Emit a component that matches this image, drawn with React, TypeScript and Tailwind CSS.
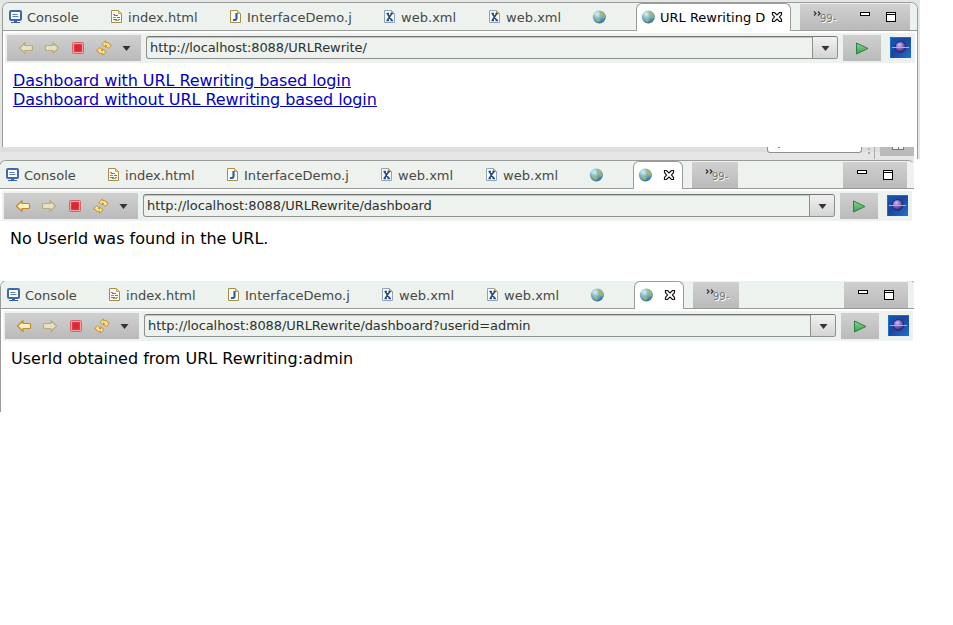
import React from "react";

function ConsoleIcon() {
  return (
    <svg width="16" height="16" viewBox="0 0 16 16" className="shrink-0">
      <rect x="2" y="2" width="11" height="9" rx="1" fill="#fff" stroke="#3f6aa8" strokeWidth="2" />
      <path d="M4.5 5.5h5M4.5 7.5h6" stroke="#5b7fae" />
      <path d="M6 12h3v1H6z" fill="#3465a4" />
      <path d="M3 13.5h9" stroke="#3465a4" />
    </svg>
  );
}

function FileIcon({ kind }: { kind: "html" | "J" | "X" }) {
  const stroke = kind === "X" ? "#8fa3c0" : "#a88d48";
  return (
    <svg width="16" height="16" viewBox="0 0 16 16" className="shrink-0">
      <path d="M2.5 1.5h7l3 3v9h-10z" fill="#fbfcf8" stroke={stroke} />
      <path d="M9.5 1.5v3h3z" fill="#f2d48a" stroke="#c9a55a" />
      {kind === "html" && (
        <>
          <path d="M4 5.5h2M4 8.5h3M9 10.5h2" stroke="#cf6a80" />
          <path d="M5 6.5h4M8 8.5h3M4 10.5h4" stroke="#5776ad" />
          <path d="M6 11.5h4" stroke="#89a874" />
        </>
      )}
      {kind === "J" && <path d="M8.500 4v5.200c0 1.600-1 2-3.500 1.800" fill="none" stroke="#24609c" strokeWidth="2.100" />}
      {kind === "X" && (
        <path d="M5.200 4.500l4.600 7M9.800 4.500l-4.600 7M4.500 4.500H7M8.500 4.500H11M4.500 11.500H7M8.500 11.500H11" stroke="#234a84" strokeWidth="1.500" />
      )}
    </svg>
  );
}

function GlobeIcon() {
  return (
    <svg width="16" height="16" viewBox="0 0 16 16" className="shrink-0">
      <defs>
        <radialGradient id="sea" cx="35%" cy="28%" r="75%">
          <stop offset="0" stopColor="#dcf2f9" />
          <stop offset="0.5" stopColor="#6fb2d2" />
          <stop offset="1" stopColor="#34708f" />
        </radialGradient>
      </defs>
      <circle cx="8.3" cy="8" r="6.5" fill="url(#sea)" />
      <path d="M9 3l2.500-.5 2.500 3 .2 3-2 1.500-1-2.500-2.500-1zM4 8.500l2.500 0 2.500 1.800 0 1.500-2 1.500-2.500-2.500z" fill="#b3b765" opacity=".75" />
      <path d="M3 5l3-2 1 2-2 2z" fill="#c5e4cc" opacity=".7" />
    </svg>
  );
}

function CloseIcon() {
  return (
    <svg width="12" height="12" viewBox="0 0 12 12" className="shrink-0">
      <path
        d="M1.5 1.5h2L6 4l2.500-2.500h2v2L8.500 6l2 2.500v2h-2L6 8l-2.500 2.500h-2v-2L3.500 6l-2-2.500z"
        fill="#fff"
        stroke="#111"
        strokeWidth="1.2"
      />
    </svg>
  );
}

function Overflow() {
  return (
    <div className="flex h-[26px] items-start">
      <svg width="8" height="6" viewBox="0 0 8 6" className="mt-[7px] shrink-0">
        <path d="M1 .5L3 2.500 1 4.500M5 .5L7 2.500 5 4.500" fill="none" stroke="#333" strokeWidth="1.200" />
      </svg>
      <span className="-ml-px mt-[9px] text-[10px] leading-[12px] text-[#777] [text-shadow:1px_1px_0_#fff]">99-</span>
    </div>
  );
}

function WindowControls() {
  return (
    <svg width="37" height="13" viewBox="0 0 37 13" className="mt-[7px] shrink-0">
      <rect x="0.500" y="1.500" width="9" height="3" fill="#fff" stroke="#000" />
      <rect x="26.500" y="1.500" width="9" height="9" fill="#fff" stroke="#000" />
      <path d="M26 3.500h10" stroke="#000" />
    </svg>
  );
}

function Arrow({ active, flip }: { active: boolean; flip?: boolean }) {
  return (
    <svg width="16" height="14" viewBox="0 0 16 14" className={flip ? "shrink-0 -scale-x-100" : "shrink-0"}>
      <path
        d="M1.500 7L7 1.700V4.500h6.500q1 0 1 1v3q0 1-1 1H7v2.800z"
        fill={active ? "#fff3bd" : "#e6e1c4"}
        stroke={active ? "#c08c28" : "#b8ab7c"}
        strokeWidth="1.200"
        strokeLinejoin="round"
      />
    </svg>
  );
}

function StopIcon() {
  return (
    <svg width="12" height="12" viewBox="0 0 12 12" className="shrink-0">
      <rect x=".5" y=".5" width="11" height="11" rx="1" fill="#f0a3a6" stroke="#d5646a" />
      <rect x="2.500" y="2.500" width="7" height="7" fill="#e22530" stroke="#dd3d47" />
    </svg>
  );
}

function RefreshIcon() {
  return (
    <svg width="16" height="16" viewBox="0 0 16 16" className="shrink-0">
      <g fill="#fbe396" stroke="#c6922f" strokeLinejoin="round">
        <path d="M6 4.500L9.500 .8V2.500h1.500q2.500 0 3 2.500h1.300L12.500 8.500 9 5.500h1.500q-.3-.8-1-.7v2.200z" />
        <path d="M10 11.500L6.500 15.200V13.500H5Q2.500 13.500 2 11H.7L3.500 7.500 7 10.500H5.500q.3.800 1 .7V9z" />
      </g>
    </svg>
  );
}

function Caret() {
  return (
    <svg width="9" height="6" viewBox="0 0 9 6" className="shrink-0">
      <path d="M.5 0h8L4.500 5z" fill="#333" />
    </svg>
  );
}

function PlayIcon() {
  return (
    <svg width="14" height="13" viewBox="0 0 14 13">
      <defs>
        <linearGradient id="go" x1="0" y1="0" x2="0" y2="1">
          <stop offset="0" stopColor="#91d494" />
          <stop offset="1" stopColor="#36a149" />
        </linearGradient>
      </defs>
      <path d="M1.500 1l11.500 5.500-11.500 5.500z" fill="url(#go)" stroke="#27803f" strokeLinejoin="round" />
    </svg>
  );
}

function EclipseLogo() {
  return (
    <svg width="21" height="21" viewBox="0 0 21 21" className="shrink-0">
      <defs>
        <linearGradient id="space" x1="0" y1="0" x2="1" y2="1">
          <stop offset="0" stopColor="#0d5cb4" />
          <stop offset=".45" stopColor="#1a459f" />
          <stop offset="1" stopColor="#2470cc" />
        </linearGradient>
        <radialGradient id="orb" cx=".4" cy=".3" r=".75">
          <stop offset="0" stopColor="#d0bfee" />
          <stop offset=".5" stopColor="#7d62b8" />
          <stop offset="1" stopColor="#261c66" />
        </radialGradient>
      </defs>
      <rect width="21" height="21" fill="url(#space)" />
      <path d="M.5 21V.5H21" fill="none" stroke="#1c70cc" />
      <circle cx="10.500" cy="10" r="5.300" fill="url(#orb)" stroke="#251c63" strokeWidth=".8" />
      <path d="M2 10.500h17" stroke="#b0a9e4" strokeWidth="1.200" />
    </svg>
  );
}

function Tab({ width, icon, label }: { width: string; icon: React.ReactNode; label?: string }) {
  return (
    <div className={`flex h-[27px] shrink-0 items-center gap-[3px] pt-px text-[#464846] ${width}`}>
      {icon}
      {label && <span className="whitespace-nowrap pt-[2px] tracking-[0.03px]">{label}</span>}
    </div>
  );
}

type BrowserProps = {
  url: string;
  title?: string;
  canGoBack?: boolean;
  rightBorder?: boolean;
  children: React.ReactNode;
};

const GRAY = "bg-gradient-to-b from-[#d0d0d0] to-[#b9bab9]";

function Browser({ url, title, canGoBack = false, rightBorder, children }: BrowserProps) {
  return (
    <section
      className={`h-full w-[916px] shrink-0 overflow-hidden rounded-t-[7px] border-l border-t border-[#999c99] bg-white ${
        rightBorder ? "border-r" : "border-r border-r-transparent"
      }`}
    >
      <div className="flex h-[28px] border-b border-[#999c99] bg-[#edf2ee] pl-[5px] text-[13px] leading-[16px]">
        <Tab width="w-[101px]" icon={<ConsoleIcon />} label="Console" />
        <Tab width="w-[119px]" icon={<FileIcon kind="html" />} label="index.html" />
        <Tab width="w-[154px]" icon={<FileIcon kind="J" />} label="InterfaceDemo.j" />
        <Tab width="w-[105px]" icon={<FileIcon kind="X" />} label="web.xml" />
        <Tab width="w-[104px]" icon={<FileIcon kind="X" />} label="web.xml" />
        <Tab width="w-[45px]" icon={<GlobeIcon />} />
        <div
          className={`flex h-[28px] shrink-0 items-center rounded-t-[6px] border-x border-t border-[#999c99] bg-white pb-px pl-[3px] text-black ${
            title ? "w-[155px]" : "w-[50px]"
          }`}
        >
          <GlobeIcon />
          {title && <span className="ml-[4px] w-[107px] whitespace-nowrap pt-[2px]">{title}</span>}
          <span className={title ? "ml-[4px]" : "ml-[10px]"}>
            <CloseIcon />
          </span>
        </div>
        {title ? (
          <div className={`ml-[9px] mt-px flex h-[26px] w-[110px] shrink-0 pl-[13px] ${GRAY}`}>
            <Overflow />
            <span className="ml-auto mr-[13px]">
              <WindowControls />
            </span>
          </div>
        ) : (
          <>
            <div className={`ml-[9px] mt-px h-[26px] w-[46px] shrink-0 pl-[13px] ${GRAY}`}>
              <Overflow />
            </div>
            <div className={`ml-[105px] mt-px h-[26px] w-[64px] shrink-0 pl-[14px] ${GRAY}`}>
              <WindowControls />
            </div>
          </>
        )}
      </div>
      <div className="ml-[2px] mt-[2px] flex h-[30px] w-[910px] bg-[#edf2ee] pl-[2px] pt-[2px]">
        <div className={`flex h-[26px] w-[134px] shrink-0 items-center pl-[11px] ${GRAY}`}>
          <Arrow active={canGoBack} />
          <span className="ml-[10px]">
            <Arrow active={false} flip />
          </span>
          <span className="ml-[12px]">
            <StopIcon />
          </span>
          <span className="ml-[12px]">
            <RefreshIcon />
          </span>
          <span className="ml-[10px] mt-[2px]">
            <Caret />
          </span>
        </div>
        <div className="ml-[5px] mt-px flex h-[23px] w-[692px] shrink-0 overflow-hidden rounded-[3px] border border-[#8d908d] border-t-[#737673] bg-[#edf2ee] shadow-[inset_0_1px_0_#c2c6c2]">
          <div className="grow whitespace-nowrap pl-[3px] text-[13px] leading-[21px] tracking-[-0.08px] text-[#2e302e]">{url}</div>
          <div className="flex w-[25px] items-center justify-center border-l border-[#8d908d] bg-gradient-to-b from-[#f0f1f0] to-[#d3d4d3] pt-[2px]">
            <Caret />
          </div>
        </div>
        <div className={`ml-[5px] flex h-[26px] w-[38px] shrink-0 items-center justify-center ${GRAY}`}>
          <PlayIcon />
        </div>
        <div className="ml-[9px] mt-[2px]">
          <EclipseLogo />
        </div>
      </div>
      <main className="pl-[10px] pt-[8px] text-[16px] leading-[19px] text-black">{children}</main>
    </section>
  );
}

function ClippedEditorStrip() {
  return (
    <div className="flex h-[13px] w-[914px] bg-gradient-to-b from-[#dce0dd] from-[38%] to-[#e6e6e6] to-[39%]">
      <div className="ml-[767px] h-[6px] w-[95px] rounded-b-[3px] border-x border-b border-[#8f918f] bg-white pl-[10px]">
        <div className="h-px w-[2px] bg-[#777]" />
      </div>
      <div className="ml-[6px] h-[7px] w-[2px] border-b-2 border-[#aaa] pt-px">
        <div className="h-[2px] bg-[#b5b5b5]" />
      </div>
      <div className="ml-[4px] h-[12px] w-px bg-[#aaa]" />
      <div className="ml-[5px] h-[9px] w-[34px] bg-[#b9bab9] pl-[12px]">
        <div className="flex h-[3px] w-[12px] justify-center border-x border-b border-[#777] bg-[#f3f2e8]">
          <div className="w-px bg-[#777]" />
        </div>
      </div>
    </div>
  );
}

export default function App() {
  return (
    <div className="h-[625px] w-[953px] overflow-hidden bg-white font-['DejaVu_Sans',sans-serif]">
      <div className="flex h-[147px] w-[920px] bg-[#e5e6e5] pl-[2px] pt-[2px]">
        <Browser url="http://localhost:8088/URLRewrite/" title="URL Rewriting D" rightBorder>
          <div className="tracking-[-0.07px] text-[#0000c8] underline">
            <a className="block">Dashboard with URL Rewriting based login</a>
            <a className="block">Dashboard without URL Rewriting based login</a>
          </div>
        </Browser>
      </div>
      <div className="flex h-[13px]">
        <ClippedEditorStrip />
        <div className="ml-[3px] h-[12px] w-[3px] border-l border-[#999c99] bg-[#e5e6e5]" />
      </div>
      <div className="h-[121px] w-[914px] overflow-hidden bg-gradient-to-b from-[#e6e6e6] from-[6px] to-white to-[6px]">
        <div className="-ml-px flex h-full">
          <Browser url="http://localhost:8088/URLRewrite/dashboard" canGoBack>
            No UserId was found in the URL.
          </Browser>
        </div>
      </div>
      <div className="h-[131px] w-[914px] overflow-hidden">
        <div className="-mt-px flex h-[132px]">
          <Browser url="http://localhost:8088/URLRewrite/dashboard?userid=admin" canGoBack>
            UserId obtained from URL Rewriting:admin
          </Browser>
        </div>
      </div>
    </div>
  );
}
